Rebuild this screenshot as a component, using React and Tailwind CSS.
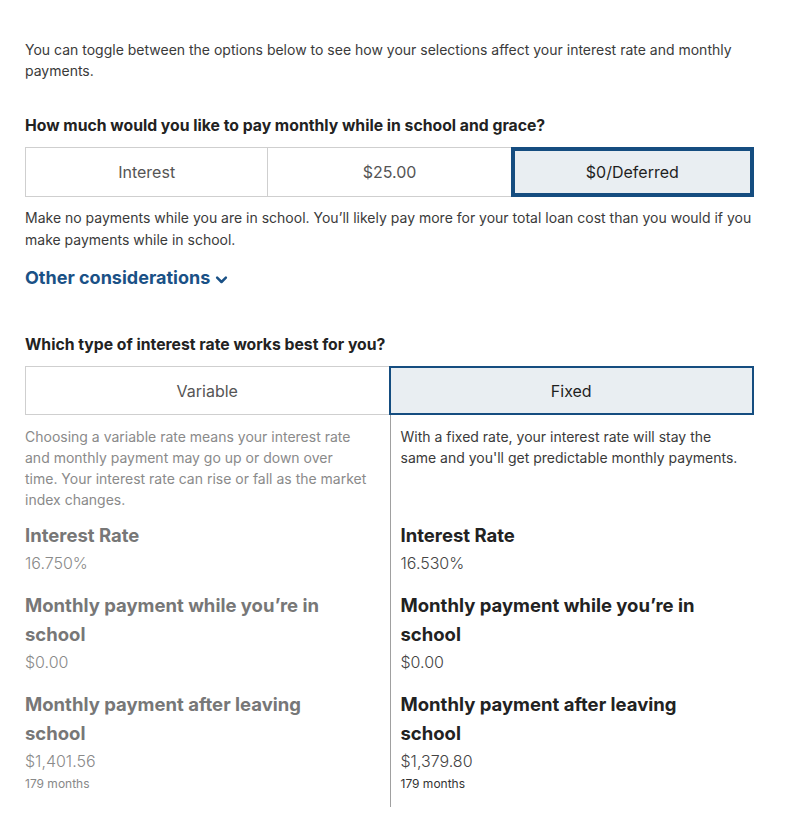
import React, { useState } from 'react';

const Segment = ({ label, selected, thick, onClick, className = '' }) => (
    <button
        onClick={onClick}
        className={`flex items-center justify-center text-[16px] ${selected ? (thick ? 'bg-[#e9eef2] border-[4px] border-[#154d80] text-[#1f1f1f]' : 'bg-[#e9eef2] border-2 border-[#154d80] text-[#1f1f1f]') : 'bg-white text-[#555]'} ${className}`}
    >
        {label}
    </button>
);

const Stat = ({ title, value, note, muted }) => (
    <div className="mt-[16px] first:mt-0">
        <div className={`text-[18.5px] font-bold leading-[29px] ${muted ? 'text-[#777]' : 'text-[#222]'}`}>{title}</div>
        <div className={`mt-px text-[16px] font-light leading-[24px] ${muted ? 'text-[#8a8a8a]' : 'text-[#444]'}`}>{value}</div>
        {note && <div className={`mt-[2px] text-[12px] leading-[18px] ${muted ? 'text-[#888]' : 'text-[#333]'}`}>{note}</div>}
    </div>
);

export default function App() {
    const [payment, setPayment] = useState('deferred');
    const [rate, setRate] = useState('fixed');

    return (
        <div className="w-[791px] min-h-[823px] bg-white pl-[25px] pr-[37px] pt-[39px] text-[#333]" style={{ fontFamily: 'Inter, "Liberation Sans", sans-serif' }}>
            <p className="text-[14px] leading-[21px] text-[#3a3a3a]">
                You can toggle between the options below to see how your selections affect your interest rate and monthly payments.
            </p>

            <h2 className="mt-[34px] text-[15.75px] font-bold leading-[22px] text-[#222]">
                How much would you like to pay monthly while in school and grace?
            </h2>

            {/* payment toggle */}
            <div className="mt-[10px] grid grid-cols-3 h-[50px] border border-[#cfcfcf]">
                <Segment label="Interest" selected={payment === 'interest'} thick onClick={() => setPayment('interest')} className="border-r border-[#cfcfcf]" />
                <Segment label="$25.00" selected={payment === '25'} thick onClick={() => setPayment('25')} />
                <Segment label="$0/Deferred" selected={payment === 'deferred'} thick onClick={() => setPayment('deferred')} className="-my-px -mr-px" />
            </div>

            <p className="mt-[10px] text-[14px] leading-[22px] text-[#3a3a3a]">
                Make no payments while you are in school. You’ll likely pay more for your total loan cost than you would if you make payments while in school.
            </p>

            <button className="mt-[13px] flex items-center gap-[4px] text-[18px] font-bold text-[#1a5186]">
                Other considerations
                <svg width="15" height="15" viewBox="0 0 24 24" fill="none" stroke="#1a5186" strokeWidth="4" strokeLinecap="round" strokeLinejoin="round" className="mt-[3px]">
                    <path d="M5 9l7 7 7-7" />
                </svg>
            </button>

            <h2 className="mt-[43px] text-[15.75px] font-bold leading-[22px] text-[#222]">
                Which type of interest rate works best for you?
            </h2>

            {/* rate toggle */}
            <div className="mt-[10px] grid grid-cols-2 h-[49px]">
                <Segment label="Variable" selected={rate === 'variable'} onClick={() => setRate('variable')} className="border border-[#cfcfcf]" />
                <Segment label="Fixed" selected={rate === 'fixed'} onClick={() => setRate('fixed')} className="-ml-px" />
            </div>

            <div className="grid grid-cols-2">
                <div className="pr-[23px] pt-[11px]">
                    <p className="text-[14px] leading-[21px] text-[#8a8a8a]">
                        Choosing a variable rate means your interest rate and monthly payment may go up or down over time. Your interest rate can rise or fall as the market index changes.
                    </p>
                    <div className="mt-[11px] w-[320px]">
                        <Stat muted title="Interest Rate" value="16.750%" />
                        <Stat muted title="Monthly payment while you’re in school" value="$0.00" />
                        <Stat muted title="Monthly payment after leaving school" value="$1,401.56" note="179 months" />
                    </div>
                </div>
                <div className="border-l border-[#a0a0a0] pl-[10px] pr-[12px] pt-[11px] pb-[14px]">
                    <p className="text-[14px] leading-[21px] text-[#3a3a3a]">
                        With a fixed rate, your interest rate will stay the same and you'll get predictable monthly payments.
                    </p>
                    <div className="mt-[53px] w-[320px]">
                        <Stat title="Interest Rate" value="16.530%" />
                        <Stat title="Monthly payment while you’re in school" value="$0.00" />
                        <Stat title="Monthly payment after leaving school" value="$1,379.80" note="179 months" />
                    </div>
                </div>
            </div>
        </div>
    );
}
